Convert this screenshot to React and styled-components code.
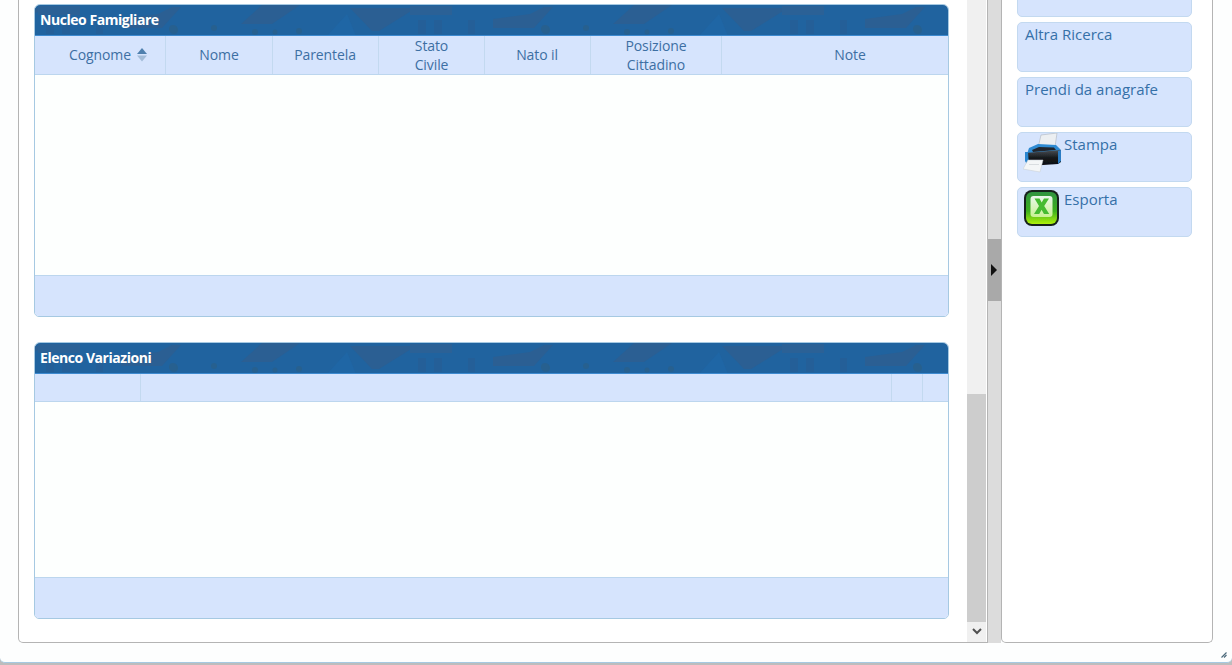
import React from "react";
import styled, { createGlobalStyle } from "styled-components";

const Global = createGlobalStyle`
  html, body { margin: 0; padding: 0; height: 100%; overflow: hidden; background: #a9a9a9; }
  body { font-family: "Open Sans", "Liberation Sans", sans-serif; }
`;
const Screen = styled.div`height: 665px; width: 1232px; overflow: hidden; background: linear-gradient(#a4a4a4, #bdbdbd);`;
const Dialog = styled.div`
  height: 662px; box-sizing: content-box; background: #fdfefe; border-bottom: 1px solid #a6c9e2;
  border-radius: 0 0 5px 5px; display: flex; flex-direction: column;
`;
const Panes = styled.div`
  height: 643px; box-sizing: border-box; margin: 0 19px 0 18px; display: flex; flex: none;
`;
const MainPane = styled.div`
  width: 970px; flex: none; box-sizing: border-box; background: #fff; border: 1px solid #b4b4b4; border-top: 0;
  border-radius: 0 0 0 5px; display: flex; overflow: hidden;
`;
const Content = styled.div`
  width: 948px; flex: none; box-sizing: border-box; padding: 4px 18px 0 15px; display: flex; flex-direction: column; gap: 25px;
`;
const Scrollbar = styled.div`
  width: 19px; flex: none; background: #f0f0f0; display: flex; flex-direction: column;
`;
const TrackGap = styled.div`height: 394px; flex: none;`;
const Thumb = styled.div`height: 228px; flex: none; background: #cdcdcd;`;
const ArrowBox = styled.div`flex: 1; display: flex; align-items: center; justify-content: center; padding-bottom: 2px;`;
const Splitter = styled.div`
  width: 13px; flex: none; background: #dcdcdc; padding-top: 239px; box-sizing: border-box;
`;
const SplitHandle = styled.div`
  height: 62px; background: #a9a9a9; display: flex; align-items: center; justify-content: center; padding-right: 2px;
`;
const SidePane = styled.div`
  flex: 1; background: #fff; border: 1px solid #b4b4b4; border-top: 0; border-radius: 0 0 5px 5px; overflow: hidden;
  padding: 0 20px 0 15px; box-sizing: border-box;
`;
const ActionList = styled.div`display: flex; flex-direction: column; gap: 5px; margin-top: -33px;`;
const Action = styled.div`
  height: 50px; box-sizing: border-box; background: #d6e4fd; border: 1px solid #c3d9f0; border-radius: 5px;
  display: flex; align-items: flex-start; padding: 0 6px 0 7px; color: #3570a8; font-size: 15px; line-height: 22px;
`;
const ActionIcon = styled.span`width: 41px; height: 40px; flex: none; margin-left: -2px; display: block;`;

const Grid = styled.section`
  position: relative; height: ${(p) => p.$h}px; flex: none; box-sizing: border-box; background: #fdfffe;
  border: 1px solid #a6c9e2; border-radius: 6px 6px 5px 5px; display: flex; flex-direction: column; overflow: hidden;
`;
const Title = styled.h2`
  position: relative; margin: 0; height: 31px; flex: none; box-sizing: border-box; background: #20639f; color: #fff;
  font-size: 14px; font-weight: 700; line-height: 29px; padding-left: 5px; letter-spacing: -0.45px;
  border-bottom: 1px solid #3d8ad0; overflow: hidden;
`;
const TitleText = styled.span`position: relative;`;
const Texture = styled.svg`position: absolute; left: -35px; top: -5px;`;
const Head = styled.div`
  height: ${(p) => p.$h}px; flex: none; box-sizing: border-box; background: #d6e4fd; border-bottom: 1px solid #bcd6ee;
  display: grid; grid-template-columns: ${(p) => p.$cols};
`;
const HeadCell = styled.div`
  border-right: 1px solid #c3d9f0; color: #3d6fa3; font-size: 14px; line-height: 19px; text-align: center;
  letter-spacing: -0.1px; box-sizing: border-box;
  padding: 0 ${(p) => p.$pull || 0}px ${(p) => (p.$single ? 1 : 0)}px ${(p) => p.$indent || 0}px;
  display: flex; align-items: center; justify-content: center; gap: 6px;
  &:last-child { border-right: 0; }
`;
const Body = styled.div`flex: 1;`;
const Foot = styled.div`height: 41px; flex: none; background: #d6e4fd; border-top: 1px solid #bcd6ee; box-sizing: border-box;`;
const Status = styled.div`flex: 1; display: flex; justify-content: flex-end; align-items: flex-start; padding: 9px 5px 0 0;`;

const seg = [-372, 0, 372, 744];
const TitleTexture = () => (
  <Texture width="950" height="36" aria-hidden="true">
    {seg.map((o) => (
      <g key={o} transform={`translate(${o} 0)`}>
        <polygon points="262,5 300,5 272,24 241,24" fill="#2b5f93" />
        <polygon points="350,8 416,8 379,31 372,31" fill="#2b5f93" />
        <polygon points="327,36 347,14 356,36" fill="#1f66a5" />
        <rect x="410" y="6" width="42" height="9" fill="#2b6196" />
        <rect x="418" y="20" width="8" height="14" fill="#245f98" />
        <rect x="434" y="20" width="8" height="14" fill="#245f98" />
        <rect x="468" y="20" width="7" height="14" fill="#245f98" />
        <polygon points="493,19 530,14 544,7 553,7 534,28 493,28" fill="#2b5f93" />
        <circle cx="173" cy="29" r="4" fill="#27608f" />
        <circle cx="214" cy="28" r="3" fill="#27608f" />
        <circle cx="255" cy="32" r="3" fill="#27608f" />
        <circle cx="275" cy="32" r="2.5" fill="#27608f" />
        <circle cx="299" cy="31" r="3" fill="#27608f" />
        <circle cx="546" cy="30" r="4" fill="#27608f" />
      </g>
    ))}
  </Texture>
);

const SortIcon = () => (
  <svg width="10" height="14" viewBox="0 0 10 14" aria-hidden="true">
    <polygon points="5,0 10,6 0,6" fill="#4f80ae" />
    <polygon points="0,7.5 10,7.5 5,13.5" fill="#a3bcd8" />
  </svg>
);

const PrinterIcon = () => (
  <svg width="41" height="40" viewBox="0 0 41 40" aria-hidden="true">
    <defs>
      <linearGradient id="pb" x1="0" y1="0" x2="0" y2="1">
        <stop offset="0" stopColor="#4a4e54" />
        <stop offset="0.5" stopColor="#16181b" />
        <stop offset="1" stopColor="#0c0d0f" />
      </linearGradient>
      <filter id="ps" x="-5%" y="-5%" width="110%" height="110%"><feGaussianBlur stdDeviation="0.35" /></filter>
    </defs>
    <g filter="url(#ps)">
      <polygon points="18,2 34,0 32,14 15,15" fill="#eceff2" stroke="#aeb6bd" strokeWidth="0.6" />
      <polygon points="6,15 15,11 33,12 38,17 38,20 4,21" fill="#2f8ad2" />
      <polygon points="9,17 16,14 31,14.5 33,17 10,19" fill="#24282d" />
      <polygon points="2,20 38,17 38,29 35,31 5,33 3,29" fill="url(#pb)" />
      <polygon points="2,19 5,19 6,32 5,33 2,28" fill="#2a86d0" />
      <polygon points="35,18 38,17 38,28 35,31" fill="#2a7cc4" />
      <polygon points="5,27 20,27 17,39 0,36" fill="#f4f6f7" stroke="#c6ccd1" strokeWidth="0.5" />
      <rect x="6" y="31" width="10" height="1" fill="#d9dde0" />
    </g>
  </svg>
);

const ExcelIcon = () => (
  <svg width="41" height="40" viewBox="0 0 41 40" aria-hidden="true">
    <defs>
      <linearGradient id="xg" x1="0" y1="0" x2="0" y2="1">
        <stop offset="0" stopColor="#2f9440" />
        <stop offset="0.6" stopColor="#3cb01c" />
        <stop offset="1" stopColor="#aef00c" />
      </linearGradient>
      <linearGradient id="xw" x1="0" y1="0" x2="0" y2="1">
        <stop offset="0" stopColor="#eaf8ec" />
        <stop offset="1" stopColor="#c8f194" />
      </linearGradient>
      <filter id="xs" x="-5%" y="-5%" width="110%" height="110%"><feGaussianBlur stdDeviation="0.55" /></filter>
    </defs>
    <g filter="url(#xs)">
      <rect x="1" y="2" width="35" height="36" rx="8" fill="#17201b" />
      <rect x="3" y="4" width="31" height="32" rx="6" fill="url(#xg)" />
      <rect x="7.5" y="8" width="22" height="21" rx="3" fill="url(#xw)" />
      <path d="M11.5 10.5h5l2.2 4 2.3-4h5l-4.8 7.5 5 8h-5.2l-2.4-4.3-2.4 4.3h-5.2l5-8z" fill="#45bb30" />
    </g>
  </svg>
);

export default function App() {
  return (
    <Screen>
      <Global />
      <Dialog>
        <Panes>
          <MainPane>
            <Content>
              <Grid $h={313}>
                <Title><TitleTexture /><TitleText>Nucleo Famigliare</TitleText></Title>
                <Head $h={39} $cols="131px 107px 106px 106px 106px 131px 1fr">
                  <HeadCell $single $indent={16}>Cognome <SortIcon /></HeadCell>
                  <HeadCell $single>Nome</HeadCell>
                  <HeadCell $single $pull={1}>Parentela</HeadCell>
                  <HeadCell>Stato<br />Civile</HeadCell>
                  <HeadCell $single $pull={1}>Nato il</HeadCell>
                  <HeadCell>Posizione<br />Cittadino</HeadCell>
                  <HeadCell $single $indent={30}>Note</HeadCell>
                </Head>
                <Body />
                <Foot />
              </Grid>
              <Grid $h={277}>
                <Title><TitleTexture /><TitleText>Elenco Variazioni</TitleText></Title>
                <Head $h={28} $cols="106px 751px 31px 1fr">
                  <HeadCell /><HeadCell /><HeadCell /><HeadCell />
                </Head>
                <Body />
                <Foot />
              </Grid>
            </Content>
            <Scrollbar>
              <TrackGap />
              <Thumb />
              <ArrowBox>
                <svg width="10" height="7" viewBox="0 0 10 7" aria-hidden="true">
                  <path d="M1 1l4 4 4-4" fill="none" stroke="#505050" strokeWidth="2" />
                </svg>
              </ArrowBox>
            </Scrollbar>
          </MainPane>
          <Splitter>
            <SplitHandle>
              <svg width="8" height="12" viewBox="0 0 8 12" aria-hidden="true"><polygon points="1,0 7,6 1,12" fill="#111" /></svg>
            </SplitHandle>
          </Splitter>
          <SidePane>
            <ActionList>
              <Action />
              <Action>Altra Ricerca</Action>
              <Action>Prendi da anagrafe</Action>
              <Action><ActionIcon><PrinterIcon /></ActionIcon>Stampa</Action>
              <Action><ActionIcon><ExcelIcon /></ActionIcon>Esporta</Action>
            </ActionList>
          </SidePane>
        </Panes>
        <Status>
          <svg width="6" height="6" viewBox="0 0 6 6" aria-hidden="true">
            <path d="M5.5 0.5L0.5 5.5M5.5 3L3 5.5" stroke="#4d6b7c" strokeWidth="1.2" />
          </svg>
        </Status>
      </Dialog>
    </Screen>
  );
}
